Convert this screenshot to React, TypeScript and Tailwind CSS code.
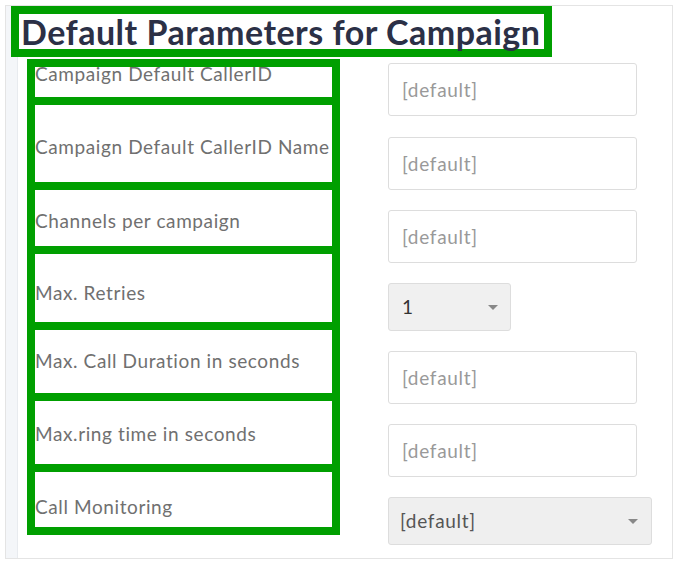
import React from 'react';

const labels = [
    { text: 'Campaign Default CallerID', h: 'h-[38px]', mt: '-mt-[2px]' },
    { text: 'Campaign Default CallerID Name', h: 'h-[85px]', mt: 'mt-[33px]' },
    { text: 'Channels per campaign', h: 'h-[64px]', mt: 'mt-[22px]' },
    { text: 'Max. Retries', h: 'h-[76px]', mt: 'mt-[30px]' },
    { text: 'Max. Call Duration in seconds', h: 'h-[71px]', mt: 'mt-[22px]' },
    { text: 'Max.ring time in seconds', h: 'h-[71px]', mt: 'mt-[24px]' },
    { text: 'Call Monitoring', h: 'h-[63px]', mt: 'mt-[26px]' },
];

function Caret() {
    return (
        <svg width="10" height="5" viewBox="0 0 10 5" className="shrink-0">
            <path d="M0 0 L10 0 L5 5 Z" fill="#888" />
        </svg>
    );
}

function TextInput() {
    return (
        <input
            type="text"
            placeholder="[default]"
            className="w-[249px] h-[53px] border border-[#dddddd] rounded-[3px] bg-white px-[13px] text-[19px] tracking-[0.7px] text-[#555] placeholder:text-[#999] outline-none"
        />
    );
}

export default function App() {
    return (
        <div className="w-[677px] h-[562px] bg-white pt-[5px] pl-[5px]" style={{ fontFamily: 'Lato, "Noto Sans", sans-serif' }}>
            <div className="w-[668px] h-[554px] border border-[#e4e4e4] flex">
                {/* left strip */}
                <div className="w-[12px] shrink-0 bg-[#f4f6f9] border-r border-[#e8ebef]" />

                <div className="flex-1 flex flex-col">
                    {/* Heading */}
                    <div className="-ml-[7px] w-[541px] h-[51px] border-[8px] border-[#009f00] bg-white flex items-center pl-[2px]">
                        <h1 className="text-[34px] font-bold tracking-[0.5px] text-[#2b3046] leading-none whitespace-nowrap">
                            Default Parameters for Campaign
                        </h1>
                    </div>

                    <div className="flex items-start mt-[2px]">
                        {/* Labels */}
                        <div className="ml-[9px] w-[313px] border-4 border-[#009f00] flex flex-col">
                            {labels.map((l) => (
                                <div key={l.text} className={`${l.h} border-4 border-[#009f00] bg-white overflow-hidden`}>
                                    <div className={`${l.mt} text-[19px] tracking-[0.6px] leading-[18px] text-[#707070] whitespace-nowrap`}>{l.text}</div>
                                </div>
                            ))}
                        </div>

                        {/* Inputs */}
                        <div className="ml-[48px] mt-[4px] flex flex-col gap-5">
                            <div className="mb-[1px]">
                                <TextInput />
                            </div>
                            <TextInput />
                            <TextInput />
                            <div className="w-[123px] h-[48px] border border-[#dddddd] rounded-[3px] bg-[#f0f0f0] flex items-center justify-between pl-[13px] pr-[12px]">
                                <span className="text-[19px] text-[#333]">1</span>
                                <Caret />
                            </div>
                            <TextInput />
                            <TextInput />
                            <div className="w-[264px] h-[48px] border border-[#dddddd] rounded-[3px] bg-[#efefef] flex items-center justify-between pl-[11px] pr-[13px]">
                                <span className="text-[19px] tracking-[0.7px] text-[#555]">[default]</span>
                                <Caret />
                            </div>
                        </div>
                    </div>
                </div>
            </div>
        </div>
    );
}
